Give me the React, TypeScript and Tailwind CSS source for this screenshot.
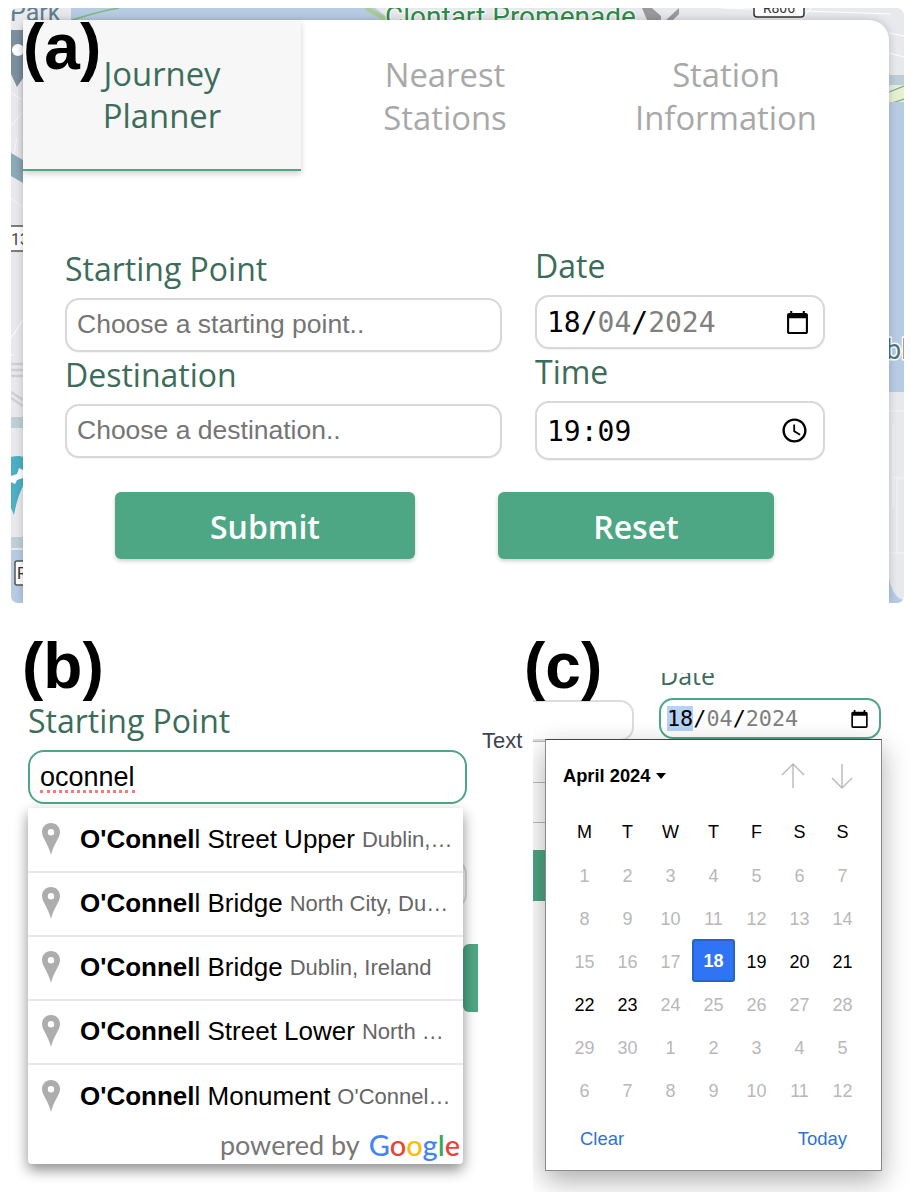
import React from "react";

const sans = "font-['Liberation_Sans',Arial,sans-serif]";
const open = "font-['Open_Sans',sans-serif]";
const mono = "font-['DejaVu_Sans_Mono',monospace]";

function MapArt() {
  return (
    <svg className="absolute inset-0" width="893" height="595" viewBox="0 0 893 595">
      <rect width="893" height="595" fill="#e8e9ed" />
      <path d="M60 0H364L380 12H60Z" fill="#b7cbe3" />
      <path d="M108 0Q70 6 5 34" stroke="#7dbb7c" strokeWidth="1.5" fill="none" />
      <path d="M355 0L376 12" stroke="#a8cc8f" strokeWidth="4" fill="none" />
      <path d="M710 0L880 6M800 0L790 12" stroke="#fff" strokeWidth="1" fill="none" />
      <text x="-1" y="13" fontSize="25" fill="#5f7f8c" fontFamily="Roboto, sans-serif">Park</text>
      <text x="374" y="18" fontSize="28" fill="#2f8a4b" stroke="#ffffff" strokeWidth="2" paintOrder="stroke" fontFamily="Roboto, sans-serif">Clontarf Promenade</text>
      <path d="M631 0H641L650 8V12H636ZM655 12L668 0V6L662 12Z" fill="#9a9a9a" />
      <rect x="743" y="-8" width="50" height="17" rx="3" fill="#fff" stroke="#333" strokeWidth="1.5" />
      <text x="768" y="5" fontSize="14" textAnchor="middle" fill="#333" fontFamily="Roboto, sans-serif">R806</text>
      <path d="M0 22H12V70L6 79L0 66Z" fill="#7c8f9d" />
      <circle cx="7" cy="42" r="6" fill="#fff" />
      <path d="M0 145L12 152V175L0 168Z" fill="#8ba9b7" />
      <path d="M0 85L12 92M0 118L12 104M0 190L12 200M6 130L3 145" stroke="#f6f6f8" strokeWidth="1" />
      <rect x="0" y="218" width="14" height="25" fill="#fff" />
      <path d="M0 218H12M0 243H12" stroke="#555" strokeWidth="1.5" />
      <text x="0" y="237" fontSize="16" fill="#444" fontFamily="Roboto, sans-serif">13</text>
      <path d="M0 330L12 312M0 347H3" stroke="#fff" strokeWidth="1" />
      <path d="M0 356H12M0 362H12M0 368H12M0 390L12 398M0 384L12 392" stroke="#cfd1d5" strokeWidth="2.5" fill="none" />
      <rect x="0" y="409" width="12" height="11" fill="#bdd0d5" />
      <path d="M0 449Q8 447 12 449V478Q6 490 3 507L0 500Z" fill="#4cafc4" />
      <path d="M0 468L6 466L8 460L12 462V470L6 472L4 476L0 474Z" fill="#fff" />
      <rect x="0" y="529" width="12" height="11" fill="#bdd0d5" />
      <rect x="0" y="542" width="12" height="53" fill="#b7cbe3" />
      <rect x="4" y="553" width="14" height="24" rx="2" fill="#fff" stroke="#555" strokeWidth="1.5" />
      <text x="6" y="571" fontSize="16" fill="#333" fontFamily="Roboto, sans-serif">R</text>
      <path d="M878 67H893V77H878Z" fill="#bccdd3" />
      <path d="M878 84L893 78V92L878 96Z" fill="#e7efd3" />
      <path d="M878 84L893 78M878 96L893 91" stroke="#6cb56f" strokeWidth="1.2" />
      <rect x="878" y="94" width="15" height="290" fill="#b7cbe3" />
      <text x="875" y="351" fontSize="27" fill="#4d7480" stroke="#ffffff" strokeWidth="3" paintOrder="stroke" fontFamily="Roboto, sans-serif">bl</text>
      <path d="M878 403H893M882 417V500M882 470H893M886 470V545M878 545H893" stroke="#f3f4f6" strokeWidth="1" />
      <path d="M878 570Q882 590 893 592V595H878Z" fill="#b7cbe3" />
      <path d="M878 25L893 28M878 45L893 49" stroke="#fff" strokeWidth="1" />
    </svg>
  );
}

function Field({ label, children, inputClass = "h-[54px]" }: { label: string; children: React.ReactNode; inputClass?: string }) {
  return (
    <div>
      <div className={`${open} flex h-[52px] items-center pb-[7px] text-[32px] leading-[44px] text-[#3c6c5a]`}>{label}</div>
      <div className={`${inputClass} flex items-center justify-between rounded-[14px] border-2 border-[#d8d8d8] bg-white pl-[10px] shadow-[0_1px_1px_rgba(0,0,0,0.05)]`}>{children}</div>
    </div>
  );
}

function Placeholder({ children }: { children: string }) {
  return <span className={`${sans} text-[26.5px] text-[#757575]`}>{children}</span>;
}

function CalIcon({ className }: { className: string }) {
  return (
    <svg className={className} viewBox="2 1 20 22" fill="#000">
      <path d="M20 3h-1V1h-2v2H7V1H5v2H4c-1.1 0-2 .9-2 2v16c0 1.1.9 2 2 2h16c1.1 0 2-.9 2-2V5c0-1.1-.9-2-2-2zm0 18H4V8h16v13z" />
    </svg>
  );
}

function Pin() {
  return (
    <svg width="20" height="32" viewBox="0 0 20 32" className="shrink-0">
      <path fillRule="evenodd" fill="#adadad" d="M10 0C4.6 0 1 4 1 9c0 6 6 11 9 23 3-12 9-17 9-23 0-5-3.6-9-9-9zm0 6a3.2 3.2 0 1 1 0 6.4A3.2 3.2 0 0 1 10 6z" />
    </svg>
  );
}

const rows = [
  ["l Street Upper", "Dublin,…"],
  ["l Bridge", "North City, Du…"],
  ["l Bridge", "Dublin, Ireland"],
  ["l Street Lower", "North …"],
  ["l Monument", "O'Connel…"],
];

const cal: [string, number][][] = [
  [["1", 0], ["2", 0], ["3", 0], ["4", 0], ["5", 0], ["6", 0], ["7", 0]],
  [["8", 0], ["9", 0], ["10", 0], ["11", 0], ["12", 0], ["13", 0], ["14", 0]],
  [["15", 0], ["16", 0], ["17", 0], ["18", 2], ["19", 1], ["20", 1], ["21", 1]],
  [["22", 1], ["23", 1], ["24", 0], ["25", 0], ["26", 0], ["27", 0], ["28", 0]],
  [["29", 0], ["30", 0], ["1", 0], ["2", 0], ["3", 0], ["4", 0], ["5", 0]],
  [["6", 0], ["7", 0], ["8", 0], ["9", 0], ["10", 0], ["11", 0], ["12", 0]],
];

function Tag({ children, className }: { children: string; className: string }) {
  return <div className={`absolute z-20 ${sans} text-[64px] font-bold leading-[72px] text-black ${className}`}>{children}</div>;
}

export default function App() {
  return (
    <div className="relative h-[1192px] w-[911px] overflow-hidden bg-white pt-[8px]">
      <Tag className="left-[23px] top-[11px]">(a)</Tag>
      <Tag className="left-[22px] top-[630px]">(b)</Tag>
      <Tag className="left-[524px] top-[630px]">(c)</Tag>

      {/* Panel (a) */}
      <div className="relative ml-[11px] h-[595px] w-[893px] overflow-hidden rounded-[7px] pl-[12px] pt-[12px]">
        <MapArt />
        <div className={`relative h-[583px] w-[866px] rounded-t-[20px] bg-white shadow-[0_0_8px_rgba(0,0,0,0.2)] ${open}`}>
          <div className="flex text-center text-[32.8px] leading-[43px]">
            <div className="h-[151px] w-[278px] border-b-2 border-[#4ea784] bg-[#f7f7f7] pt-[33px] leading-[42px] text-[#3c6c5a] shadow-[0_3px_6px_rgba(0,0,0,0.18)]">Journey<br />Planner</div>
            <div className="h-[151px] w-[288px] pt-[33px] text-[#a8a8a8]">Nearest<br />Stations</div>
            <div className="h-[151px] w-[274px] pt-[33px] text-[#a8a8a8]">Station<br />Information</div>
          </div>

          <div className="mt-[72px] flex pl-[42px]">
            <div className="mt-[3px] w-[437px]">
              <Field label="Starting Point"><Placeholder>Choose a starting point..</Placeholder></Field>
              <Field label="Destination"><Placeholder>Choose a destination..</Placeholder></Field>
            </div>
            <div className="ml-[33px] w-[290px]">
              <Field label="Date">
                <span className={`${mono} pt-[2px] text-[28px] text-black`}>18/<span className="text-[#808080]">04</span>/<span className="text-[#808080]">2024</span></span>
                <CalIcon className="mr-[15px] h-[23px] w-[21px]" />
              </Field>
              <Field label="Time" inputClass="h-[59px]">
                <span className={`${mono} pt-[2px] text-[28px] text-black`}>19:09</span>
                <svg className="mr-[14px] h-[29px] w-[29px]" viewBox="0 0 24 24" fill="#000">
                  <path d="M11.99 2C6.47 2 2 6.48 2 12s4.47 10 9.99 10C17.52 22 22 17.52 22 12S17.52 2 11.99 2zM12 20c-4.42 0-8-3.58-8-8s3.58-8 8-8 8 3.58 8 8-3.58 8-8 8zm.5-13H11v6l5.25 3.15.75-1.23-4.5-2.67z" />
                </svg>
              </Field>
            </div>
          </div>

          <div className="mt-[32px] flex pl-[92px]">
            <div className="flex h-[67px] w-[300px] items-center justify-center rounded-[6px] bg-[#4ea784] pt-[2px] text-[32px] font-semibold text-white shadow-[0_2px_4px_rgba(0,0,0,0.2)]">Submit</div>
            <div className="ml-[83px] flex h-[67px] w-[276px] items-center justify-center rounded-[6px] bg-[#4ea784] pt-[2px] text-[32px] font-semibold text-white shadow-[0_2px_4px_rgba(0,0,0,0.2)]">Reset</div>
          </div>
        </div>
      </div>

      <div className="flex">
        {/* Panel (b) */}
        <div className="relative w-[482px] pl-[28px] pt-[96px]">
          <div className="absolute left-[463px] top-[341px] h-[68px] w-[15px] rounded-l-[6px] bg-[#4ea784]" />
          <div className="absolute left-[440px] top-[258px] h-[46px] w-[27px] rounded-r-[12px] border-2 border-[#dcdcdc]" />
          <div className={`${open} h-[44px] text-[32px] leading-[44px] text-[#3c6c5a]`}>Starting Point</div>
          <div className={`mt-[7px] flex h-[54px] w-[439px] items-center rounded-[16px] border-2 border-[#4ea784] bg-white pl-[10px] ${sans} text-[27px] text-black`}>
            <span className="mt-[3px] border-b-[3px] border-dotted border-[#f47c72] leading-[25px]">oconnel</span>
          </div>
          <div className={`relative mt-[4px] w-[435px] rounded-b-[4px] bg-white pt-[1px] shadow-[0_6px_14px_rgba(0,0,0,0.45)] ${sans}`}>
            {rows.map(([main, sub], i) => (
              <div key={i} className={`flex h-[64px] items-center whitespace-nowrap pb-[2px] pl-[13px] ${i < 4 ? "border-b-2 border-[#e8e8e8]" : ""}`}>
                <Pin />
                <span className="ml-[19px] text-[26px] text-black"><b>O'Connel</b>{main}</span>
                <span className="ml-[7px] text-[22px] text-[#666]">{sub}</span>
              </div>
            ))}
            <div className="flex h-[35px] items-start justify-end pr-[3px] leading-[31px]">
              <span className="font-['Lato',sans-serif] text-[27px] text-[#777]">powered by</span>
              <span className="ml-[9px] font-['Lato',sans-serif] text-[29px] font-medium">
                <span className="text-[#4285f4]">G</span><span className="text-[#ea4335]">o</span><span className="text-[#fbbc05]">o</span><span className="text-[#4285f4]">g</span><span className="text-[#34a853]">l</span><span className="text-[#ea4335]">e</span>
              </span>
            </div>
          </div>
        </div>

        {/* Panel (c) */}
        <div className="relative flex-1">
          <div className={`absolute left-0 top-[124px] ${sans} text-[22px] leading-[28px] text-[#3d4450]`}>Text</div>
          <div className="absolute left-[51px] top-0 h-[589px] w-[378px] overflow-hidden">
            <div className="absolute left-[-20px] top-[97px] h-[41px] w-[121px] rounded-r-[14px] border-2 border-[#dcdcdc] bg-white" />
            <div className="absolute left-0 top-[138px] h-[1px] w-[12px] bg-[#bbb]" />
            <div className="absolute left-0 top-[179px] h-[1px] w-[12px] bg-[#bbb]" />
            <div className="absolute left-0 top-[219px] h-[1px] w-[12px] bg-[#bbb]" />
            <div className="absolute left-0 top-[247px] h-[51px] w-[12px] bg-[#4ea784]" />

            <div className="relative ml-[126px] mt-[70px] w-[222px]">
              <div className="mb-[13px] flex h-[12px] items-end overflow-hidden">
                <span className={`${open} translate-y-[3px] pl-[1px] text-[25px] leading-[26px] text-[#3c6c5a]`}>Date</span>
              </div>
              <div className="flex h-[41px] items-center justify-between rounded-[14px] border-2 border-[#4ea784] bg-white pl-[6px]">
                <span className={`${mono} pt-[1px] text-[21.8px] text-black`}><span className="bg-[#b4d2f8]">18</span>/<span className="text-[#808080]">04</span>/<span className="text-[#808080]">2024</span></span>
                <CalIcon className="mr-[11px] h-[18px] w-[17px]" />
              </div>
            </div>

            <div className={`relative ml-[12px] h-[432px] w-[337px] border border-[#8a8a8a] border-t-[#444] bg-white shadow-[0_10px_26px_rgba(0,0,0,0.32)] ${sans}`}>
              <div className="flex h-[72px] items-center justify-between pl-[17px] pr-[27px]">
                <div className="flex items-center gap-[6px] text-[18.3px] font-bold text-black">
                  April 2024
                  <svg width="10" height="6" viewBox="0 0 10 6"><path d="M0 0H10L5 6Z" fill="#000" /></svg>
                </div>
                <div className="flex gap-[25px]">
                  <svg width="24" height="26" viewBox="0 0 24 26" fill="none" stroke="#b8b8b8" strokeWidth="1.4"><path d="M12 25V1M1 12L12 1L23 12" /></svg>
                  <svg width="24" height="26" viewBox="0 0 24 26" fill="none" stroke="#b8b8b8" strokeWidth="1.4"><path d="M12 1V25M2 15L12 25L22 15" /></svg>
                </div>
              </div>
              <div className="ml-[17px] grid w-[301px] grid-cols-7 text-center">
                {["M", "T", "W", "T", "F", "S", "S"].map((d, i) => (
                  <div key={i} className="flex h-[41px] items-center justify-center text-[18px] text-black">{d}</div>
                ))}
                {cal.flat().map(([d, s], i) =>
                  s === 2 ? (
                    <div key={i} className="flex h-[43px] items-center justify-center rounded-[3px] border-2 border-[#2563c9] bg-[#2f74f5] pt-[1px] text-[18px] font-bold text-white">{d}</div>
                  ) : (
                    <div key={i} className={`flex h-[43px] items-center justify-center pt-[3px] text-[18px] ${s === 1 ? "text-black" : "text-[#b8b8b8]"}`}>{d}</div>
                  )
                )}
              </div>
              <div className="mt-[14px] flex justify-between pl-[34px] pr-[34px] text-[18.5px] text-[#2f74d0]">
                <span>Clear</span>
                <span>Today</span>
              </div>
            </div>
          </div>
        </div>
      </div>
    </div>
  );
}
